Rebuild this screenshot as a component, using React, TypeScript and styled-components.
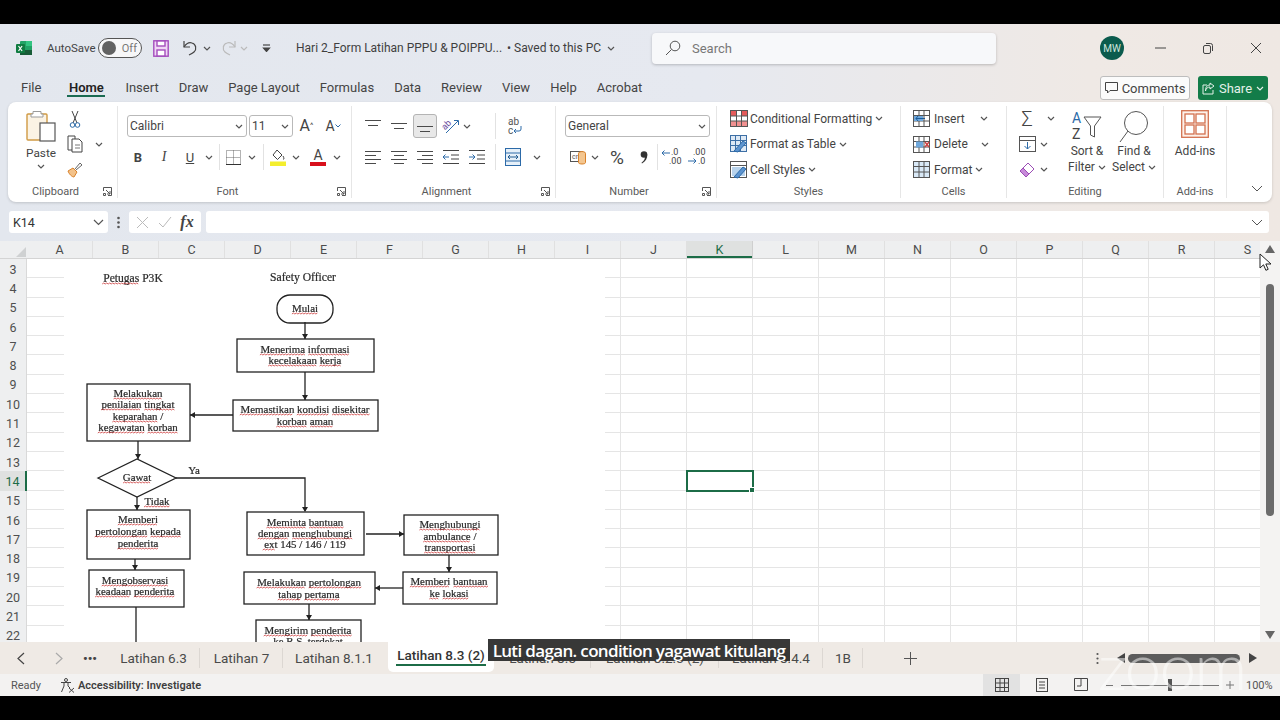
import React from 'react';
import styled, { createGlobalStyle } from 'styled-components';

const Global = createGlobalStyle`
  html, body { margin: 0; padding: 0; background: #000; }
  body { font-family: Roboto, "Noto Sans", sans-serif; color: #333; }
  * { box-sizing: border-box; }
  svg { flex-shrink: 0; }
`;

const Stage = styled.div`
  position: relative; width: 1280px; height: 720px; background: #000; padding: 24px 0; overflow: hidden;
`;
const Win = styled.div`
  width: 1280px; height: 672px; display: flex; flex-direction: column;
  background: linear-gradient(90deg, #e3e7ee 0%, #e6e9f0 55%, #efe9e5 85%, #efe8e3 100%);
`;
const TitleBar = styled.header`display: flex; align-items: center; height: 48px; font-size: 12px;`;
const Slot = styled.div<{ $w: number }>`
  flex: 0 0 ${p => p.$w}px; width: ${p => p.$w}px; display: flex; align-items: center; justify-content: center;
`;
const AutoSave = styled.span`flex: 0 0 51px; font-size: 11.5px; color: #444;`;
const Toggle = styled.div`
  flex: 0 0 44px; height: 20px; border: 1px solid #555; border-radius: 10px; background: #f7f7f8;
  display: flex; align-items: center; padding: 0 4px 0 3px; justify-content: space-between; font-size: 11px; color: #777;
`;
const Knob = styled.i`width: 14px; height: 14px; border-radius: 50%; background: #626262;`;
const FileName = styled.div`flex: 0 0 211px; font-size: 12px; color: #3f3f3f; white-space: nowrap;`;
const Saved = styled.div`flex: 0 0 100px; font-size: 12px; color: #3f3f3f; white-space: nowrap;`;
const SearchBox = styled.div`
  flex: 0 0 344px; height: 31px; margin-left: 37px; background: #f7f8fa; border-radius: 4px;
  box-shadow: 0 1px 3px rgba(0,0,0,.22); display: flex; align-items: center; gap: 11px; padding-left: 13px;
  font-size: 13px; color: #777;
`;
const Avatar = styled.div`
  flex: 0 0 24px; height: 24px; border-radius: 50%; background: #0b5b4d; color: #cfe6df; font-size: 10px;
  display: flex; align-items: center; justify-content: center; margin-left: 104px;
`;

const TabRow = styled.nav`display: flex; align-items: flex-start; height: 30px; padding-left: 21px; gap: 20px; flex: 0 0 30px;`;
const MenuTab = styled.div<{ $active?: boolean; $first?: boolean }>`
  height: 25px; padding-top: 8px; font-size: 13px; line-height: 16px; color: ${p => p.$active ? '#222' : '#444'};
  font-weight: ${p => p.$active ? 600 : 400}; border-bottom: ${p => p.$active ? '2px solid #1b6b52' : '2px solid transparent'};
  white-space: nowrap; text-align: center;
  margin-right: ${p => p.$first ? 6 : 0}px; min-width: ${p => p.$active ? 38 : 0}px;
`;
const TopActions = styled.div`margin-left: auto; display: flex; gap: 8px; padding: 4px 12px 0 0;`;
const CommentBtn = styled.div`
  width: 90px; height: 24px; background: #fbfbfb; border: 1px solid #bdbdbd; border-radius: 3px;
  display: flex; align-items: center; justify-content: center; gap: 4px; font-size: 13px; color: #444;
`;
const ShareBtn = styled.div`
  width: 70px; height: 24px; background: #137c49; border-radius: 3px; color: #e4f1ea;
  display: flex; align-items: center; justify-content: center; gap: 4px; font-size: 13px;
`;

const Ribbon = styled.section`
  height: 100px; margin: 0 8px; width: 1264px; background: #fff; border-radius: 8px; display: flex;
  box-shadow: 0 1px 3px rgba(0,0,0,.16); flex: 0 0 100px; font-size: 12px; color: #444;
`;
const Group = styled.div<{ $w: number }>`
  flex: 0 0 ${p => p.$w}px; width: ${p => p.$w}px; height: 92px; margin-top: 4px; display: flex; flex-direction: column;
  border-right: 1px solid #e6e6e6;
`;
const GroupBody = styled.div<{ $pad?: number }>`
  flex: 0 0 79px; display: flex; padding-left: ${p => p.$pad ?? 0}px;
`;
const GroupColumn = styled.div`flex: 0 0 79px; display: flex; flex-direction: column; padding-top: 9px; gap: 9px;`;
const ToolRow = styled.div<{ $pad?: number }>`display: flex; align-items: center; height: 22px; padding-left: ${p => p.$pad ?? 0}px;`;
const GroupFoot = styled.footer`display: flex; align-items: center; height: 13px; font-size: 11px; color: #5a5a5a;`;
const GroupLabel = styled.span`flex: 1; text-align: center;`;
const Launcher = styled.span`flex: 0 0 14px; display: flex; align-items: center; justify-content: flex-start;`;
const PasteColumn = styled.div`
  width: 36px; display: flex; flex-direction: column; align-items: center; padding-top: 4px; font-size: 11.8px;
  line-height: 16px; gap: 3px;
`;
const StackRows = styled.div`display: grid; grid-auto-rows: 25.5px; align-items: center;`;
const EditingRows = styled(StackRows)`flex: 0 0 44px;`;
const StackRow = styled.div`display: flex; align-items: center; white-space: nowrap;`;
const Select = styled.div<{ $w: number }>`
  flex: 0 0 ${p => p.$w}px; height: 22px; border: 1px solid #b9b9b9; border-radius: 3px; background: #fff;
  display: flex; align-items: center; justify-content: space-between; padding: 0 3px 0 2px; font-size: 12px; color: #444;
`;
const Gap = styled.i<{ $w: number }>`flex: 0 0 ${p => p.$w}px;`;
const Rule = styled.i`flex: 0 0 1px; width: 1px; height: 26px; background: #e2e2e2; display: block;`;
const Pressed = styled.div`
  width: 24px; height: 24px; background: #e8e8e8; border: 1px solid #b4b4b4; border-radius: 3px;
  display: flex; align-items: center; justify-content: center;
`;
const LetterBtn = styled.span<{ $b?: boolean; $i?: boolean; $u?: boolean; $serif?: boolean; $size?: number; $thin?: boolean }>`
  font-family: ${p => p.$serif ? '"Liberation Serif", serif' : 'inherit'};
  font-weight: ${p => p.$b ? 700 : p.$thin ? 300 : 400}; font-style: ${p => p.$i ? 'italic' : 'normal'};
  text-decoration: ${p => p.$u ? 'underline' : 'none'}; font-size: ${p => p.$size ?? 13}px; color: #444; line-height: 1;
`;
const ColorLetter = styled.div`display: flex; flex-direction: column; align-items: center; font-size: 14px; line-height: 13px; color: #444;`;
const ColorBar = styled.i<{ $c: string }>`width: 16px; height: 4px; background: ${p => p.$c}; display: block;`;
const StyleRowLabel = styled.span`margin-left: 2px; margin-right: 3px; font-size: 12px;`;
const CellLabel = styled.span<{ $w: number }>`margin-left: 4px; width: ${p => p.$w}px; font-size: 12px;`;
const BigBtn = styled.div<{ $w: number }>`
  flex: 0 0 ${p => p.$w}px; display: flex; flex-direction: column; align-items: center; padding-top: 4px;
  font-size: 12px; line-height: 16px; white-space: nowrap;
`;
const BigIcon = styled.div`height: 33px; display: flex; align-items: flex-start; justify-content: center;`;
const InlineChev = styled.span`display: flex; align-items: center; gap: 3px;`;
const CollapseWrap = styled.div`flex: 1; display: flex; align-items: flex-end; justify-content: flex-end; padding: 0 9px 10px 0;`;

const FormulaBar = styled.div`display: flex; align-items: center; height: 22px; margin: 9px 0 8px; padding-left: 9px; flex: 0 0 22px;`;
const NameBox = styled.div`
  flex: 0 0 99px; height: 22px; background: #fff; border-radius: 3px; display: flex; align-items: center;
  justify-content: space-between; padding: 0 4px; font-size: 12.5px; color: #333;
`;
const FxBox = styled.div`
  flex: 0 0 72px; height: 22px; background: #fff; border-radius: 3px; display: flex; align-items: center;
  justify-content: space-around; padding: 0 3px;
`;
const FxText = styled.span`font-family: "Liberation Serif", serif; font-style: italic; font-size: 16px; font-weight: 700; color: #444;`;
const FormulaInput = styled.div`
  flex: 0 0 1063px; height: 22px; margin-left: 5px; background: #fff; border-radius: 3px; display: flex; align-items: center;
  justify-content: flex-end; padding-right: 3px;
`;

const Sheet = styled.main`flex: 1; display: flex; min-height: 0; background: #fff;`;
const GridArea = styled.div`width: 1260px; overflow: hidden; display: flex; flex-direction: column;`;
const HeadRow = styled.div`display: flex; height: 18px; flex: 0 0 18px; background: #eeeff0; border-bottom: 1px solid #d4d4d4;`;
const Corner = styled.div`flex: 0 0 27px; display: flex; align-items: flex-end; justify-content: flex-end; padding: 0 1px 1px 0;`;
const ColHead = styled.div<{ $on?: boolean }>`
  flex: 0 0 66px; display: flex; align-items: center; justify-content: center; font-size: 12.5px;
  background: ${p => p.$on ? '#dfe1e0' : 'transparent'};
  border-right: 1px solid ${p => p.$on ? '#cfcfcf' : '#e0e0e0'};
  box-shadow: ${p => p.$on ? 'inset 0 -2px 0 #1c6c47' : 'none'};
  color: ${p => p.$on ? '#1c6c47' : '#4c4c4c'};
`;
const GridBody = styled.div`position: relative; flex: 1; overflow: hidden;`;
const GridRow = styled.div`display: flex; height: 19.3px;`;
const RowHead = styled.div<{ $on?: boolean }>`
  flex: 0 0 27px; display: flex; align-items: center; justify-content: center; font-size: 12.5px; padding-top: 1px;
  background: ${p => p.$on ? '#dfe1e0' : '#eeeff0'}; color: ${p => p.$on ? '#1c6c47' : '#4f4f4f'};
  border-right: ${p => p.$on ? '2px solid #1c6c47' : '1px solid #d9d9d9'};
`;
const Cell = styled.div<{ $sel?: boolean }>`
  position: relative; flex: 0 0 66px; border-right: 1px solid #e5e5e5; border-bottom: 1px solid #e5e5e5; background: #fff;
  ${p => p.$sel ? `
    outline: 2px solid #1c6c47; outline-offset: -1px; z-index: 2;
    &::after { content: ''; position: absolute; right: -3px; bottom: -3px; width: 4px; height: 4px; background: #1c6c47; border: 1px solid #fff; }
  ` : ''}
`;
const Chart = styled.svg`
  position: absolute; left: 64px; top: 0; width: 541px; height: 383px; background: #fff; filter: blur(.3px);
  text { font-family: "Liberation Serif", serif; font-size: 10.9px; fill: #2a2a2a; stroke: #2a2a2a; stroke-width: .22px; text-anchor: middle; }
  text.title { font-size: 11.6px; }
`;
const VScroll = styled.aside`
  width: 20px; display: flex; flex-direction: column; align-items: center; padding: 4px 0 3px; background: #f4f3f2;
`;
const VThumb = styled.i`width: 8px; height: 232px; margin-top: 31px; border-radius: 4px; background: #6c6c6c; display: block;`;
const VDown = styled.div`margin-top: auto; display: flex;`;
const SheetBar = styled.div`
  display: flex; align-items: center; height: 32px; flex: 0 0 32px; background: #efeae5; font-size: 13.5px; color: #4a4a4a;
`;
const SheetTab = styled.div<{ $w: number; $on?: boolean; $line?: boolean }>`
  flex: 0 0 ${p => p.$w}px; height: ${p => p.$on ? 30 : 32}px; display: flex; align-items: center; justify-content: center;
  position: relative; white-space: nowrap;
  ${p => p.$on ? `
    background: #fff; border-radius: 0 0 5px 5px; align-self: flex-start; font-weight: 500; color: #333; padding-bottom: 4px; margin-left: 3px;
    &::after { content: ''; position: absolute; left: 8px; right: 8px; bottom: 6px; height: 2px; background: #1c6c47; }
  ` : ''}
  ${p => p.$line ? `&::before { content: ''; position: absolute; right: 0; top: 6px; bottom: 6px; width: 1px; background: #dcd7d2; }` : ''}
`;
const HScroll = styled.div`display: flex; align-items: center;`;
const HThumb = styled.i`flex: 0 0 112px; height: 9px; background: #5c5c5c; border-radius: 5px; display: block; margin: 0 9px 0 3px;`;
const StatusBar = styled.footer`
  display: flex; align-items: center; height: 22px; flex: 0 0 22px; background: #f3f2f1; font-size: 11px; color: #555; padding-left: 11px;
`;
const ReadyText = styled.span`flex: 0 0 47px;`;
const StatusStrong = styled.span`flex: 0 0 127px; font-weight: 600; color: #3e3e3e; margin-left: 3px; font-size: 11px; white-space: nowrap;`;
const ViewBtn = styled.div<{ $on?: boolean }>`
  flex: 0 0 37px; height: 22px; display: flex; align-items: center; justify-content: center; background: ${p => p.$on ? '#e2e2e2' : 'transparent'};
`;
const ZoomSlider = styled.div`position: relative; flex: 0 0 98px; height: 1px; background: #777; margin: 0 5px 0 0;`;
const ZoomThumb = styled.i`position: absolute; left: 47px; top: -6px; width: 4px; height: 12px; background: #555; display: block;`;
const Caption = styled.div`
  position: absolute; left: 488px; top: 639px; width: 302px; height: 22px; background: rgba(48,48,48,.96); color: #fff;
  font-family: "Open Sans", sans-serif; font-size: 17px; font-weight: 600; line-height: 23px; text-align: center; white-space: nowrap;
  letter-spacing: -.65px;
`;
const Watermark = styled.div`
  position: absolute; left: 1098px; top: 630px; font-family: Lato, sans-serif; font-size: 66px; line-height: 70px; letter-spacing: -2px; font-weight: 300;
  color: rgba(255,255,255,.5); pointer-events: none;
`;
const Pointer = styled.svg`position: absolute; left: 1259px; top: 253px;`;

/* ---------- icons ---------- */
type SP = { w: number; h: number; children?: React.ReactNode; c?: string; sw?: number };
const I = ({ w, h, children, c = '#444', sw = 1 }: SP) => (
  <svg width={w} height={h} viewBox={`0 0 ${w} ${h}`} fill="none" stroke={c} strokeWidth={sw}>{children}</svg>
);
const Chev = ({ c = '#555' }: { c?: string }) => <I w={8} h={5} c={c} sw={1.2}><path d="M1 1l3 3 3-3" /></I>;
const Launch = () => (
  <I w={9} h={9} c="#555"><path d="M.5 4V.5H8.500V8.500H5" /><path d="M3 3l4 4M7 4v3H4" /><path d="M.5 6.500h2v2h-2z" /></I>
);
const Lines = ({ l }: { l: [number, number, number][] }) => (
  <I w={18} h={16} c="#4a4a4a">{l.map(([a, b, y], i) => <path key={i} d={`M${a} ${y + .5}H${b}`} />)}</I>
);
const Logo = () => (
  <svg width="16" height="16" viewBox="0 0 16 16">
    <rect x="4" y="1" width="12" height="14" rx="1" fill="#21a366" />
    <rect x="10" y="1" width="6" height="5" fill="#33c481" />
    <rect x="4" y="10" width="12" height="5" fill="#185c37" />
    <rect x="0" y="4" width="9" height="9" rx="1" fill="#107c41" />
    <path d="M2.500 6l3.600 5M6.100 6l-3.600 5" stroke="#fff" strokeWidth="1.200" />
  </svg>
);
const SaveIcon = () => (
  <svg width="16" height="17" viewBox="0 0 16 17" fill="#f0d6f5" stroke="#a44dbd" strokeWidth="1.400">
    <rect x=".8" y=".8" width="14.400" height="15.400" />
    <rect x="4" y="1" width="8" height="5" fill="#fff" />
    <rect x="4" y="10" width="8" height="6" fill="#fff" />
  </svg>
);
const Undo = ({ c = '#444' }: { c?: string }) => (
  <I w={16} h={16} c={c} sw={1.2}><path d="M2 1v6h6" /><path d="M2 7c2-3 5-5 8-4 4 1 5 6 2 9-1 1-3 2-5 3" /></I>
);
const Redo = ({ c = '#bbb' }: { c?: string }) => (
  <I w={16} h={16} c={c} sw={1.2}><path d="M14 1v6H8" /><path d="M14 7c-2-3-5-5-8-4-4 1-5 6-2 9 1 1 3 2 5 3" /></I>
);
const QuickMenu = () => <I w={9} h={8} c="#444" sw={1.2}><path d="M1 1h7" /><path d="M1.500 4h6L4.500 7.500z" fill="#444" /></I>;
const SearchIcon = () => <I w={16} h={16} c="#555"><circle cx="10" cy="6" r="4.800" /><path d="M6.500 9.500L1 15" /></I>;
const Minimize = () => <I w={11} h={2} c="#444"><path d="M0 1h11" /></I>;
const Restore = () => <I w={10} h={11} c="#444"><rect x=".5" y="2.500" width="7" height="8" rx="1.500" /><path d="M3 .5h4.500a2 2 0 012 2V8" /></I>;
const Close = () => <I w={12} h={12} c="#444"><path d="M1 1l10 10M11 1L1 11" /></I>;
const Comment = () => <I w={13} h={12} c="#444"><path d="M.5.500h12v8H5L2.500 11V8.500h-2z" /></I>;
const Share = () => <I w={13} h={13} c="#e4f1ea"><path d="M5 3H1v9h10V8M8 1l4 3-4 3V5C6 5 4 6 3.500 9 3.500 5 5 3 8 3z" /></I>;
const Paste = () => (
  <svg width="30" height="32" viewBox="0 0 30 32" fill="none">
    <rect x="1" y="4" width="20" height="26" rx="1" stroke="#d09a44" strokeWidth="1.400" fill="#fbf3e4" />
    <path d="M7 4V1.500h8V4h2v3H5V4z" stroke="#9b9b9b" fill="#fff" />
    <rect x="14" y="13" width="15" height="18" stroke="#555" strokeWidth="1.200" fill="#fff" />
  </svg>
);
const Cut = () => (
  <I w={12} h={18} c="#444"><path d="M3 1l5 12M9 1L4 13" /><circle cx="3.500" cy="15" r="2.300" stroke="#2c6aa8" /><circle cx="8.500" cy="15" r="2.300" stroke="#2c6aa8" /></I>
);
const CopyIcon = () => (
  <I w={16} h={18} c="#444"><path d="M5 15H1V1h7v3" /><path d="M5 4h7l3 3v10H5z" fill="#fff" /><path d="M8 10h5M8 13h5" stroke="#777" /></I>
);
const Painter = () => (
  <svg width="16" height="16" viewBox="0 0 16 16" fill="none"><path d="M1 9l5-3 4 4-3 5c-2 0-5-3-6-6z" fill="#f3c28a" stroke="#d9822b" /><path d="M8 7l5-6 2 2-6 5" stroke="#666" fill="#fff" /></svg>
);
const Borders = () => (
  <I w={15} h={15} c="#666"><path d="M.5.500h14v14H.5zM7.500 .5v14M.5 7.500h14" strokeDasharray="1 1" /><path d="M0 14.500h15" stroke="#333" /></I>
);
const Fill = () => (
  <svg width="16" height="17" viewBox="0 0 16 17" fill="none">
    <path d="M7 1l5 5-4.500 4.500L3 6z" stroke="#444" fill="#fff" /><path d="M13 7c1 2 1.500 3 0 3.500" stroke="#444" />
    <rect x="0" y="12.500" width="16" height="4.500" fill="#f4ee2d" />
  </svg>
);
const Orient = () => (
  <svg width="18" height="16" viewBox="0 0 18 16" fill="none">
    <text x="1" y="10" transform="rotate(-45 5 9)" fontSize="9" fill="#6b4ea0" fontFamily="Roboto" stroke="none">ab</text>
    <path d="M4 15L16 3M12 2.500h4.500V7" stroke="#2c6aa8" />
  </svg>
);
const Wrap = () => (
  <svg width="18" height="20" viewBox="0 0 18 20" fill="none">
    <text x="3" y="9" fontSize="10" fill="#555" stroke="none" fontFamily="Roboto">ab</text>
    <text x="3" y="18" fontSize="10" fill="#555" stroke="none" fontFamily="Roboto">c</text>
    <path d="M16 10v3a2 2 0 01-2 2H9M11 13l-2 2 2 2" stroke="#2c6aa8" />
  </svg>
);
const IndentL = () => <I w={16} h={14} c="#444"><path d="M0 .5h16M8 5h8M8 9h8M0 13.500h16" /><path d="M6 7H0M2.500 4.500L0 7l2.500 2.500" stroke="#2c6aa8" /></I>;
const IndentR = () => <I w={16} h={14} c="#444"><path d="M0 .5h16M8 5h8M8 9h8M0 13.500h16" /><path d="M0 7h6M3.500 4.500L6 7 3.500 9.500" stroke="#2c6aa8" /></I>;
const Merge = () => <I w={16} h={18} c="#2c6aa8"><rect x=".5" y=".5" width="15" height="17" fill="#e6f0f9" /><path d="M.5 5h15M.5 13h15" /><path d="M3 9h10M5 7L3 9l2 2M11 7l2 2-2 2" stroke="#205a90" /></I>;
const Accounting = () => (
  <svg width="17" height="15" viewBox="0 0 17 15" fill="none">
    <rect x=".5" y="1.500" width="12" height="10" stroke="#555" fill="#fff" />
    <text x="2" y="9" fontSize="7" stroke="none" fill="#555" fontFamily="Roboto">cr</text>
    <ellipse cx="12" cy="3.500" rx="3.500" ry="2" fill="#f4c68f" stroke="#d9822b" />
    <path d="M8.500 3.500v9c0 2 7 2 7 0v-9" fill="#f4c68f" stroke="#d9822b" />
  </svg>
);
const Comma = () => (
  <svg width="8" height="13" viewBox="0 0 8 13" fill="#333"><circle cx="4" cy="3.500" r="3.300" /><path d="M7.300 3.500c.2 4-1.800 7-5.300 9l-.5-.8C4 10 5 8 5 5.500z" /></svg>
);
const DecimalUp = () => (
  <svg width="22" height="20" viewBox="0 0 22 20" fill="none">
    <text x="10" y="8" fontSize="9" fill="#444" stroke="none" fontFamily="Roboto">.0</text>
    <text x="8" y="17" fontSize="9" fill="#444" stroke="none" fontFamily="Roboto">.00</text>
    <path d="M9 6H1M3.500 3.500L1 6l2.500 2.500" stroke="#2c6aa8" />
  </svg>
);
const DecimalDown = () => (
  <svg width="22" height="20" viewBox="0 0 22 20" fill="none">
    <text x="6" y="8" fontSize="9" fill="#444" stroke="none" fontFamily="Roboto">.00</text>
    <text x="11" y="17" fontSize="9" fill="#444" stroke="none" fontFamily="Roboto">.0</text>
    <path d="M1 14h8M6.500 11.500L9 14l-2.500 2.500" stroke="#2c6aa8" />
  </svg>
);
const CondFmt = () => (
  <svg width="18" height="17" viewBox="0 0 18 17" fill="#fff" stroke="#555">
    <rect x=".5" y=".5" width="17" height="16" /><rect x="1" y="1" width="6" height="5" fill="#e45a5a" stroke="none" /><rect x="11" y="1" width="6" height="5" fill="#e45a5a" stroke="none" /><rect x="1" y="11" width="16" height="5" fill="#f09090" stroke="none" />
    <path d="M6.500 0v17M11.500 0v17M0 6h18M0 11h18" fill="none" />
  </svg>
);
const TableFmt = () => (
  <svg width="18" height="18" viewBox="0 0 18 18" fill="none" stroke="#3d6fa5">
    <rect x=".5" y=".5" width="16" height="16" fill="#dde9f5" /><path d="M.5 5.500h16M.5 10.500h16M5.500 .5v16M10.500 .5v16" />
    <path d="M4 16l9-10 3 2-8 9z" fill="#5d94cf" stroke="#2c6aa8" />
  </svg>
);
const CellStyle = () => (
  <svg width="18" height="18" viewBox="0 0 18 18" fill="none" stroke="#555">
    <rect x=".5" y=".5" width="16" height="16" fill="#fff" /><path d="M.5 4.500h16" />
    <path d="M2 6h13v9H2z" fill="#b8d3ec" stroke="none" /><path d="M4 16l9-10 3 2-8 9z" fill="#5d94cf" stroke="#2c6aa8" />
  </svg>
);
const CellIns = ({ k }: { k: 'i' | 'd' | 'f' }) => (
  <svg width="17" height="17" viewBox="0 0 17 17" fill="#fff" stroke="#555">
    <rect x=".5" y=".5" width="16" height="16" fill={k === 'f' ? '#d9e9f7' : '#fff'} />
    <path d="M.5 5.500h16M.5 11h16M6 .5v16M11 .5v16" fill="none" />
    {k === 'i' && <><rect x="1" y="6" width="9" height="5" fill="#6fa8dc" stroke="none" /><path d="M12 8.500H3M5 6L3 8.500 5 11" stroke="#1d5c99" fill="none" /></>}
    {k === 'd' && <><rect x="3" y="5.500" width="7" height="6" fill="#6fa8dc" stroke="none" /><path d="M12 6l4 5M16 6l-4 5" stroke="#d04040" strokeWidth="1.400" fill="none" /></>}
  </svg>
);
const FillDown = () => <I w={17} h={16} c="#555"><rect x=".5" y=".5" width="16" height="15" /><path d="M.5 4.500h16" /><path d="M8.500 6v7M5.500 10l3 3 3-3" stroke="#2c6aa8" /></I>;
const Eraser = () => (
  <svg width="16" height="16" viewBox="0 0 16 16" stroke="#9b4db5"><path d="M9 1l6 6-5 5-6-6z" fill="#fff" /><path d="M4 6l6 6-3 3-6-6z" fill="#c78ad9" /></svg>
);
const SortFilter = () => (
  <svg width="32" height="32" viewBox="0 0 32 32" fill="none">
    <text x="1" y="13" fontSize="14" fill="#2c6aa8" stroke="none" fontFamily="Roboto">A</text>
    <text x="1" y="29" fontSize="14" fill="#444" stroke="none" fontFamily="Roboto">Z</text>
    <path d="M13 7h17l-6.500 9v11l-4-2v-9z" stroke="#555" />
  </svg>
);
const FindIcon = () => <I w={30} h={33} c="#555"><circle cx="17" cy="13" r="11.500" /><path d="M9 21L1 32" /></I>;
const AddIns = () => (
  <I w={28} h={28} c="#d3714f" sw={1.3}><rect x=".7" y=".7" width="26.600" height="26.600" fill="#fdf1ea" /><rect x="4" y="4" width="9" height="9" fill="#fff" /><rect x="15" y="4" width="9" height="9" fill="#fff" /><rect x="4" y="15" width="9" height="9" fill="#fff" /><rect x="15" y="15" width="9" height="9" fill="#fff" /></I>
);
const A11y = () => (
  <I w={17} h={15} c="#444"><circle cx="8" cy="2" r="1.500" /><path d="M3 4.500h10M6 5v3l-2.500 6M10 5v3l2 2" /><path d="M11 10l5 4.500M16 10l-5 4.500" /></I>
);
const Tri = ({ d, c = '#666' }: { d: 'u' | 'd' | 'l' | 'r'; c?: string }) => {
  const p = { u: 'M0 8L5 0l5 8z', d: 'M0 0l5 8 5-8z', l: 'M8 0v10L0 5z', r: 'M0 0v10l8-5z' }[d];
  const v = d === 'u' || d === 'd';
  return <svg width={v ? 10 : 8} height={v ? 8 : 10} fill={c}><path d={p} /></svg>;
};
const NormalView = () => <I w={14} h={14} c="#444"><rect x=".5" y=".5" width="13" height="13" /><path d="M5 .5v13M9.500 .5v13M.5 5h13M.5 9.500h13" /></I>;
const PageView = () => <I w={12} h={14} c="#444"><rect x=".5" y=".5" width="11" height="13" /><path d="M3 4h6M3 7h6M3 10h6" /></I>;
const BreakView = () => <I w={14} h={14} c="#444"><path d="M.5 12.500v-12h13v12M.5 12.500h13" /><path d="M7 1v7H3" /></I>;
const Dots = ({ r }: { r: number }) => (
  <I w={3} h={13} c="#555" sw={0}><circle cx="1.500" cy="2" r={r} fill="#555" /><circle cx="1.500" cy="6.500" r={r} fill="#555" /><circle cx="1.500" cy="11" r={r} fill="#555" /></I>
);

/* ---------- flowchart ---------- */
const FS = 10.9;
const cw: Record<string, number> = {};
'iljtf.,/ '.split('').forEach(c => { cw[c] = .29; });
'rs'.split('').forEach(c => { cw[c] = .37; });
'acez'.split('').forEach(c => { cw[c] = .44; });
cw.m = .78; cw.w = .72; cw.M = .89;
const measure = (s: string, fs: number) => s.split('').reduce((t, c) => t + (cw[c] ?? (/[A-Z]/.test(c) ? .66 : .5)), 0) * fs;
const clean = new Set(['P3K', 'Safety', 'Officer', '/', '145', '146', '119', 'Ya']);
const wave = (x1: number, x2: number, y: number) => {
  let d = `M${x1.toFixed(1)} ${y}`; let up = true;
  for (let x = x1 + 1.5; x < x2; x += 1.5) { d += `L${x.toFixed(1)} ${up ? y - 1 : y}`; up = !up; }
  return d;
};
type L = [string, number, number];
const titles = new Set(['Petugas P3K', 'Safety Officer']);
const lines: L[] = [
  ['Petugas P3K', 133, 278], ['Safety Officer', 303, 277], ['Mulai', 305, 308],
  ['Menerima informasi', 305, 349], ['kecelakaan kerja', 305, 360],
  ['Memastikan kondisi disekitar', 305, 409], ['korban aman', 305, 421],
  ['Melakukan', 138, 393], ['penilaian tingkat', 138, 404], ['keparahan /', 138, 416], ['kegawatan korban', 138, 427],
  ['Gawat', 137, 477], ['Ya', 194, 470], ['Tidak', 157, 501],
  ['Memberi', 138, 519], ['pertolongan kepada', 138, 531], ['penderita', 138, 543],
  ['Mengobservasi', 135, 580], ['keadaan penderita', 135, 591],
  ['Meminta bantuan', 305, 522], ['dengan menghubungi', 305, 533], ['ext 145 / 146 / 119', 305, 544],
  ['Menghubungi', 450, 524], ['ambulance /', 450, 536], ['transportasi', 450, 547],
  ['Memberi bantuan', 449, 581], ['ke lokasi', 449, 593],
  ['Melakukan pertolongan', 309, 582], ['tahap pertama', 309, 594],
  ['Mengirim penderita', 308, 630], ['ke R.S. terdekat', 308, 641],
];
const boxes = [[237, 339, 137, 33], [233, 400, 145, 31], [87, 384, 103, 57], [87, 510, 103, 49], [89, 570, 95, 37], [247, 512, 117, 43], [404, 515, 94, 40], [403, 572, 94, 32], [244, 572, 131, 32], [256, 620, 105, 40]];
const arrows: [number, number, number, number][] = [
  [305, 322, 305, 339], [305, 372, 305, 400], [233, 415, 190, 415], [138, 441, 138, 459], [137, 497, 137, 510],
  [135, 559, 135, 570], [366, 534, 404, 534], [449, 555, 449, 572], [403, 588, 375, 588], [309, 604, 309, 620],
];
const head = ([a, , c, d]: [number, number, number, number]) => {
  if (a === c) return `${c - 3},${d - 5} ${c + 3},${d - 5} ${c},${d}`;
  return c > a ? `${c - 5},${d - 3} ${c - 5},${d + 3} ${c},${d}` : `${c + 5},${d - 3} ${c + 5},${d + 3} ${c},${d}`;
};
const Flow = () => (
  <Chart viewBox="64 259 541 383">
    <g stroke="#222" strokeWidth="1.300" fill="none">
      <rect x="277" y="295" width="56" height="28" rx="13" />
      {boxes.map(([x, y, w, h], i) => <rect key={i} x={x} y={y} width={w} height={h} />)}
      <polygon points="98,478 137,459 176,478 137,497" />
      <path d="M176 478H305V511M136 607V642" />
      {arrows.map(([a, b, c, d], i) => <path key={i} d={`M${a} ${b}L${c} ${d}`} />)}
    </g>
    <polygon points={head([305, 478, 305, 512])} fill="#222" />
    {arrows.map((a, i) => <polygon key={i} points={head(a)} fill="#222" />)}
    {lines.map(([t, cx, y]) => <text key={t} className={titles.has(t) ? 'title' : undefined} x={cx} y={y + 3.5}>{t}</text>)}
    <g stroke="#cc3a3a" strokeWidth=".8" fill="none">
      {lines.flatMap(([t, cx, y]) => {
        const fs = titles.has(t) ? 11.6 : FS;
        let x = cx - measure(t, fs) / 2;
        return t.split(' ').map((wd, i) => {
          const w = measure(wd, fs);
          const from = x; x += w + .29 * fs;
          return clean.has(wd) ? null : <path key={t + i} d={wave(from, from + w, y + 6)} />;
        });
      })}
    </g>
  </Chart>
);

const cols = 'ABCDEFGHIJKLMNOPQRS'.split('');
const rows = Array.from({ length: 20 }, (_, i) => i + 3);
const menus = ['File', 'Home', 'Insert', 'Draw', 'Page Layout', 'Formulas', 'Data', 'Review', 'View', 'Help', 'Acrobat'];
const tabs: { t: string; w: number; on?: boolean }[] = [
  { t: 'Latihan 6.3', w: 93 }, { t: 'Latihan 7', w: 83 }, { t: 'Latihan 8.1.1', w: 102 },
  { t: 'Latihan 8.3 (2)', w: 106, on: true }, { t: 'Latihan 8.5', w: 97 }, { t: 'Latihan 8.2.3 (2)', w: 128 },
  { t: 'Latihan 8.4.4', w: 104 }, { t: '1B', w: 40 },
];

const Foot = ({ label, launcher }: { label: string; launcher?: boolean }) => (
  <GroupFoot><GroupLabel>{label}</GroupLabel>{launcher && <Launcher><Launch /></Launcher>}</GroupFoot>
);

export default function App() {
  return (
    <Stage>
      <Global />
      <Win>
        <TitleBar>
          <Slot $w={47}><Logo /></Slot>
          <AutoSave>AutoSave</AutoSave>
          <Toggle><Knob />Off</Toggle>
          <Slot $w={38}><SaveIcon /></Slot>
          <Slot $w={20}><Undo /></Slot>
          <Slot $w={14}><Chev /></Slot>
          <Gap $w={4} />
          <Slot $w={22}><Redo /></Slot>
          <Slot $w={8}><Chev c="#bbb" /></Slot>
          <Slot $w={36}><QuickMenu /></Slot>
          <Gap $w={12} />
          <FileName>Hari 2_Form Latihan PPPU &amp; POIPPU...</FileName>
          <Saved>• Saved to this PC</Saved>
          <Chev />
          <SearchBox><SearchIcon />Search</SearchBox>
          <Avatar>MW</Avatar>
          <Slot $w={72}><Minimize /></Slot>
          <Slot $w={24}><Restore /></Slot>
          <Gap $w={24} />
          <Slot $w={24}><Close /></Slot>
        </TitleBar>
        <TabRow>
          {menus.map(m => <MenuTab key={m} $active={m === 'Home'} $first={m === 'File'}>{m}</MenuTab>)}
          <TopActions>
            <CommentBtn><Comment />Comments</CommentBtn>
            <ShareBtn><Share />Share<Chev c="#e4f1ea" /></ShareBtn>
          </TopActions>
        </TabRow>
        <Ribbon>
          <Group $w={110}>
            <GroupBody $pad={15}>
              <PasteColumn><Paste /><span>Paste</span><Chev /></PasteColumn>
              <StackRows>
                <StackRow><Slot $w={32}><Cut /></Slot></StackRow>
                <StackRow><Slot $w={32}><CopyIcon /></Slot><Slot $w={16}><Chev /></Slot></StackRow>
                <StackRow><Slot $w={32}><Painter /></Slot></StackRow>
              </StackRows>
            </GroupBody>
            <Foot label="Clipboard" launcher />
          </Group>
          <Group $w={234}>
            <GroupColumn>
              <ToolRow $pad={9}>
                <Select $w={120}>Calibri<Chev /></Select>
                <Gap $w={2} />
                <Select $w={44}>11<Chev /></Select>
                <Slot $w={27}><LetterBtn $size={16}>A</LetterBtn><LetterBtn $size={8}>^</LetterBtn></Slot>
                <Slot $w={26}><LetterBtn $size={14}>A</LetterBtn><I w={6} h={4} c="#2c6aa8"><path d="M.5 .5l2.500 2.500 2.500-2.500" /></I></Slot>
              </ToolRow>
              <ToolRow $pad={7}>
                <Slot $w={26}><LetterBtn $b>B</LetterBtn></Slot>
                <Slot $w={26}><LetterBtn $i $serif $size={14}>I</LetterBtn></Slot>
                <Slot $w={26}><LetterBtn $u>U</LetterBtn></Slot>
                <Slot $w={12}><Chev /></Slot>
                <Slot $w={8}><Rule /></Slot>
                <Slot $w={20}><Borders /></Slot>
                <Slot $w={18}><Chev /></Slot>
                <Slot $w={4}><Rule /></Slot>
                <Slot $w={26}><Fill /></Slot>
                <Slot $w={10}><Chev /></Slot>
                <Slot $w={34}><ColorLetter>A<ColorBar $c="#d8101c" /></ColorLetter></Slot>
                <Slot $w={4}><Chev /></Slot>
              </ToolRow>
            </GroupColumn>
            <Foot label="Font" launcher />
          </Group>
          <Group $w={204}>
            <GroupColumn>
              <ToolRow $pad={8}>
                <Slot $w={26}><Lines l={[[1, 17, 2], [4, 14, 7]]} /></Slot>
                <Slot $w={26}><Lines l={[[1, 17, 5], [4, 14, 10]]} /></Slot>
                <Slot $w={26}><Pressed><Lines l={[[1, 17, 8], [4, 14, 13]]} /></Pressed></Slot>
                <Slot $w={26}><Orient /></Slot>
                <Slot $w={6}><Chev /></Slot>
                <Gap $w={25} />
                <Rule />
                <Slot $w={36}><Wrap /></Slot>
              </ToolRow>
              <ToolRow $pad={8}>
                <Slot $w={26}><Lines l={[[1, 17, 2], [1, 12, 6], [1, 17, 10], [1, 12, 14]]} /></Slot>
                <Slot $w={26}><Lines l={[[1, 17, 2], [4, 14, 6], [1, 17, 10], [4, 14, 14]]} /></Slot>
                <Slot $w={26}><Lines l={[[1, 17, 2], [6, 17, 6], [1, 17, 10], [6, 17, 14]]} /></Slot>
                <Slot $w={26}><IndentL /></Slot>
                <Slot $w={26}><IndentR /></Slot>
                <Gap $w={5} />
                <Rule />
                <Slot $w={34}><Merge /></Slot>
                <Slot $w={14}><Chev /></Slot>
              </ToolRow>
            </GroupColumn>
            <Foot label="Alignment" launcher />
          </Group>
          <Group $w={161}>
            <GroupColumn>
              <ToolRow $pad={9}><Select $w={145}>General<Chev /></Select></ToolRow>
              <ToolRow $pad={9}>
                <Slot $w={26}><Accounting /></Slot>
                <Slot $w={8}><Chev /></Slot>
                <Slot $w={36}><LetterBtn $size={19}>%</LetterBtn></Slot>
                <Slot $w={18}><Comma /></Slot>
                <Slot $w={8}><Rule /></Slot>
                <Slot $w={22}><DecimalUp /></Slot>
                <Slot $w={30}><DecimalDown /></Slot>
              </ToolRow>
            </GroupColumn>
            <Foot label="Number" launcher />
          </Group>
          <Group $w={184}>
            <GroupBody $pad={13}>
              <StackRows>
                <StackRow><CondFmt /><StyleRowLabel>Conditional Formatting</StyleRowLabel><Chev /></StackRow>
                <StackRow><TableFmt /><StyleRowLabel>Format as Table</StyleRowLabel><Chev /></StackRow>
                <StackRow><CellStyle /><StyleRowLabel>Cell Styles</StyleRowLabel><Chev /></StackRow>
              </StackRows>
            </GroupBody>
            <Foot label="Styles" />
          </Group>
          <Group $w={106}>
            <GroupBody $pad={12}>
              <StackRows>
                <StackRow><CellIns k="i" /><CellLabel $w={46}>Insert</CellLabel><Chev /></StackRow>
                <StackRow><CellIns k="d" /><CellLabel $w={47}>Delete</CellLabel><Chev /></StackRow>
                <StackRow><CellIns k="f" /><CellLabel $w={41}>Format</CellLabel><Chev /></StackRow>
              </StackRows>
            </GroupBody>
            <Foot label="Cells" />
          </Group>
          <Group $w={157}>
            <GroupBody $pad={10}>
              <EditingRows>
                <StackRow><Slot $w={20}><LetterBtn $size={20} $thin>Σ</LetterBtn></Slot><Slot $w={28}><Chev /></Slot></StackRow>
                <StackRow><Slot $w={20}><FillDown /></Slot><Slot $w={14}><Chev /></Slot></StackRow>
                <StackRow><Slot $w={20}><Eraser /></Slot><Slot $w={14}><Chev /></Slot></StackRow>
              </EditingRows>
              <BigBtn $w={44}>
                <BigIcon><SortFilter /></BigIcon>
                <span>Sort &amp;</span>
                <InlineChev>Filter <Chev /></InlineChev>
              </BigBtn>
              <Gap $w={2} />
              <BigBtn $w={46}>
                <BigIcon><FindIcon /></BigIcon>
                <span>Find &amp;</span>
                <InlineChev>Select <Chev /></InlineChev>
              </BigBtn>
            </GroupBody>
            <Foot label="Editing" />
          </Group>
          <Group $w={63}>
            <GroupBody>
              <BigBtn $w={62}>
                <BigIcon><AddIns /></BigIcon>
                <span>Add-ins</span>
              </BigBtn>
            </GroupBody>
            <Foot label="Add-ins" />
          </Group>
          <CollapseWrap><I w={12} h={7} c="#555"><path d="M1 1l5 5 5-5" /></I></CollapseWrap>
        </Ribbon>
        <FormulaBar>
          <NameBox>K14<I w={11} h={7} c="#555" sw={1.2}><path d="M1 1l4.500 4.500L10 1" /></I></NameBox>
          <Slot $w={21}><Dots r={1.3} /></Slot>
          <FxBox>
            <I w={13} h={13} c="#bbb"><path d="M1 1l11 11M12 1L1 12" /></I>
            <I w={14} h={12} c="#bbb"><path d="M1 7l4 4 8-10" /></I>
            <FxText>fx</FxText>
          </FxBox>
          <FormulaInput><I w={12} h={7} c="#555"><path d="M1 1l5 5 5-5" /></I><Gap $w={3} /></FormulaInput>
        </FormulaBar>
        <Sheet>
          <GridArea>
            <HeadRow>
              <Corner><svg width="10" height="10" fill="#cfd1d2"><path d="M10 0v10H0z" /></svg></Corner>
              {cols.map(c => <ColHead key={c} $on={c === 'K'}>{c}</ColHead>)}
            </HeadRow>
            <GridBody>
              {rows.map(r => (
                <GridRow key={r}>
                  <RowHead $on={r === 14}>{r}</RowHead>
                  {cols.map(c => <Cell key={c} $sel={r === 14 && c === 'K'} />)}
                </GridRow>
              ))}
              <Flow />
            </GridBody>
          </GridArea>
          <VScroll>
            <Tri d="u" />
            <VThumb />
            <VDown><Tri d="d" /></VDown>
          </VScroll>
        </Sheet>
        <SheetBar>
          <Slot $w={42}><I w={8} h={13} c="#444" sw={1.2}><path d="M7 1L1 6.500 7 12" /></I></Slot>
          <Slot $w={33}><I w={8} h={13} c="#aaa" sw={1.2}><path d="M1 1l6 5.500L1 12" /></I></Slot>
          <Slot $w={30}><LetterBtn $b $size={13}>•••</LetterBtn></Slot>
          <Gap $w={2} />
          {tabs.map((t, i) => <SheetTab key={t.t} $w={t.w} $on={t.on} $line={!t.on && i !== 2}>{t.t}</SheetTab>)}
          <Slot $w={94}><I w={13} h={13} c="#555"><path d="M6.500 0v13M0 6.500h13" /></I></Slot>
          <Gap $w={138} />
          <Slot $w={4}><Dots r={1.1} /></Slot>
          <Gap $w={18} />
          <HScroll>
            <Tri d="l" c="#444" />
            <HThumb />
            <Tri d="r" c="#444" />
          </HScroll>
        </SheetBar>
        <StatusBar>
          <ReadyText>Ready</ReadyText>
          <A11y />
          <StatusStrong>Accessibility: Investigate</StatusStrong>
          <Gap $w={778} />
          <ViewBtn $on><NormalView /></ViewBtn>
          <Slot $w={44}><PageView /></Slot>
          <Slot $w={34}><BreakView /></Slot>
          <Slot $w={23}><I w={7} h={1} c="#777"><path d="M0 .5h7" /></I></Slot>
          <ZoomSlider><ZoomThumb /></ZoomSlider>
          <Slot $w={12}><I w={8} h={8} c="#777"><path d="M4 0v8M0 4h8" /></I></Slot>
          <Gap $w={10} />
          <span>100%</span>
        </StatusBar>
      </Win>
      <Caption>Luti dagan. condition yagawat kitulang</Caption>
      <Watermark>zoom</Watermark>
      <Pointer width="13" height="19" viewBox="0 0 13 19"><path d="M1 1v14l3.500-3.200 2.400 5.500 2.300-1-2.400-5.300H12z" fill="#fff" stroke="#222" /></Pointer>
    </Stage>
  );
}
